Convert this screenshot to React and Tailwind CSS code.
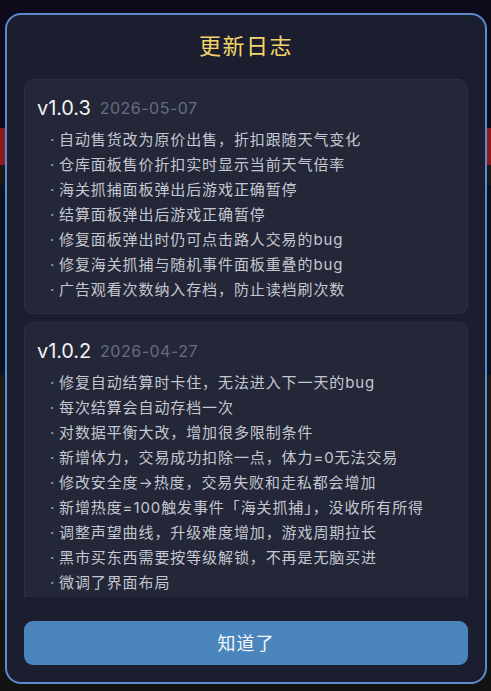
import React from "react";

const logs = [
  {
    version: "v1.0.3",
    date: "2026-05-07",
    items: [
      "自动售货改为原价出售，折扣跟随天气变化",
      "仓库面板售价折扣实时显示当前天气倍率",
      "海关抓捕面板弹出后游戏正确暂停",
      "结算面板弹出后游戏正确暂停",
      "修复面板弹出时仍可点击路人交易的bug",
      "修复海关抓捕与随机事件面板重叠的bug",
      "广告观看次数纳入存档，防止读档刷次数",
    ],
  },
  {
    version: "v1.0.2",
    date: "2026-04-27",
    items: [
      "修复自动结算时卡住，无法进入下一天的bug",
      "每次结算会自动存档一次",
      "对数据平衡大改，增加很多限制条件",
      "新增体力，交易成功扣除一点，体力=0无法交易",
      "修改安全度→热度，交易失败和走私都会增加",
      "新增热度=100触发事件「海关抓捕」，没收所有所得",
      "调整声望曲线，升级难度增加，游戏周期拉长",
      "黑市买东西需要按等级解锁，不再是无脑买进",
      "微调了界面布局",
    ],
  },
];

const font = { fontFamily: 'Inter, "Noto Sans CJK SC", sans-serif' };

function LogCard({ log }) {
  return (
    <div className="shrink-0 rounded-[9px] border border-[#2b2f42] bg-[#232738] px-[12px] pb-[10px] pt-[13px]">
      <div className="flex h-[30px] items-center gap-[9px]">
        <span className="text-[20px] tracking-[-0.1px] text-[#f2f2f4]">{log.version}</span>
        <span className="text-[16px] tracking-[0.5px] text-[#676c82]">{log.date}</span>
      </div>
      <ul className="mt-[5px]">
        {log.items.map((item) => (
          <li key={item} className="flex h-[25px] items-center text-[15px] tracking-[0.9px] text-[#c4c7d1]">
            <span className="w-[22px] shrink-0 pl-[13px] tracking-normal text-[#9ca0ad]">·</span>
            <span>{item}</span>
          </li>
        ))}
      </ul>
    </div>
  );
}

export default function App() {
  return (
    <div className="relative h-[691px] w-[491px] overflow-hidden bg-[#0d0b1a]" style={font}>
      <div className="flex h-full flex-col">
        <div className="h-[128px] bg-[#0e0b1c]" />
        <div className="h-[37px] bg-[#8e1b1b]" />
        <div className="h-[20px] bg-[#1b1915]" />
        <div className="h-[190px] bg-[#0b1322]" />
        <div className="h-[225px] bg-[#1c1a13]" />
        <div className="flex-1 bg-[#131312]" />
      </div>

      <div className="absolute left-[5px] top-[13px] flex h-[671px] w-[482px] flex-col rounded-[16px] border-2 border-[#5b8acd] bg-[#1b1e2e] px-[17px] pb-[16px] pt-[15px]">
        <h2 className="h-[32px] text-center text-[22px] leading-[32px] tracking-[1.5px] text-[#f3d36b]">更新日志</h2>
        <div className="mt-[17px] flex h-[518px] flex-col gap-[8px] overflow-hidden">
          {logs.map((log) => (
            <LogCard key={log.version} log={log} />
          ))}
        </div>
        <button className="mt-[24px] h-[44px] w-full rounded-[9px] bg-[#4a86bb] text-[18px] tracking-[1px] text-[#f4f7fb]">
          知道了
        </button>
      </div>
    </div>
  );
}
